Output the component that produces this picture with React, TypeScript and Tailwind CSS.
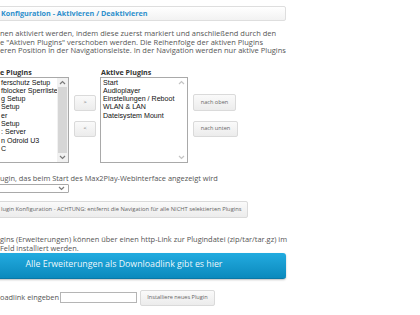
import React from 'react'

const leftItems = [
    'ferschutz Setup',
    'fblocker Sperrliste',
    'g Setup',
    ' Setup',
    'er',
    'Setup',
    ': Server',
    'n Odroid U3',
    'C',
]

const rightItems = ['Start', 'Audioplayer', 'Einstellungen / Reboot', 'WLAN & LAN', 'Dateisystem Mount']

function Chevron({ up, light }: { up?: boolean; light?: boolean }) {
    return (
        <svg width="7" height="5" viewBox="0 0 7 5">
            <polyline
                points={up ? '1,4 3.5,1.5 6,4' : '1,1 3.5,3.5 6,1'}
                fill="none"
                stroke={light ? '#c4c4c4' : '#7a7a7a'}
                strokeWidth="1.2"
            />
        </svg>
    )
}

function ListBox({ items, pad, active }: { items: string[]; pad: number; active?: boolean }) {
    return (
        <div className="relative h-[86px] border border-[#a9a9a9] bg-white overflow-hidden">
            <div className="pt-[1px] font-['Liberation_Sans'] text-[7.1px] leading-[8.33px] text-[#111]">
                {items.map(i => (
                    <div key={i} className="whitespace-nowrap" style={{ paddingLeft: pad }}>{i}</div>
                ))}
            </div>
            <div className={`absolute right-0 top-0 bottom-0 w-[11px] flex flex-col items-center justify-between py-[2px] ${active ? 'bg-[#f1f1f1]' : 'bg-white'}`}>
                <Chevron up light={!active} />
                {active && <div className="w-[9px] flex-1 my-[2px] bg-[#d6d6d6]" />}
                <Chevron light={!active} />
            </div>
        </div>
    )
}

function SmallButton({ children, className }: { children: React.ReactNode; className?: string }) {
    return (
        <button type="button" className={`flex items-center justify-center border border-[#dadada] rounded-[2px] bg-gradient-to-b from-[#fafafa] to-[#ececec] text-[5.6px] text-[#666] ${className ?? ''}`}>
            {children}
        </button>
    )
}

export default function App() {
    return (
        <div className="w-[420px] h-[315px] overflow-hidden bg-white font-['Open_Sans'] text-[#555]">
            <div className="-ml-[38px] w-[324px] pt-[6px]">
                <div className="h-[15px] border border-[#dedede] rounded-[2px] bg-gradient-to-b from-white to-[#f2f2f2] flex items-center pl-[38px]">
                    <span className="text-[7.2px] font-bold text-[#2d8fcc] whitespace-nowrap">Konfiguration - Aktivieren / Deaktivieren</span>
                </div>

                <div className="mt-[8px] pl-[38px] text-[7.5px] leading-[8.5px] whitespace-nowrap">
                    <div>nen aktiviert werden, indem diese zuerst markiert und anschließend durch den</div>
                    <div>e "Aktiven Plugins" verschoben werden. Die Reihenfolge der aktiven Plugins</div>
                    <div>eren Position in der Navigationsleiste. In der Navigation werden nur aktive Plugins</div>
                </div>

                <div className="mt-[13px] flex">
                    <div className="w-[107px]">
                        <div className="h-[9px] leading-[9px] text-[7.1px] font-bold text-[#333] pl-[38px] whitespace-nowrap">e Plugins</div>
                        <ListBox items={leftItems} pad={38} active />
                    </div>
                    <div className="ml-[5px] w-[22px] pt-[27px] flex flex-col gap-[10px]">
                        <SmallButton className="h-[16px] w-[22px]">&gt;</SmallButton>
                        <SmallButton className="h-[16px] w-[22px]">&lt;</SmallButton>
                    </div>
                    <div className="ml-[4px] w-[88px]">
                        <div className="h-[9px] leading-[9px] text-[7.1px] font-bold text-[#333] pl-[1px] whitespace-nowrap">Aktive Plugins</div>
                        <ListBox items={rightItems} pad={2} />
                    </div>
                    <div className="ml-[5px] pt-[26px] flex flex-col gap-[10px]">
                        <SmallButton className="h-[17px] w-[43px]">nach oben</SmallButton>
                        <SmallButton className="h-[16px] w-[45px]">nach unten</SmallButton>
                    </div>
                </div>

                <div className="mt-[11px] pl-[38px] text-[7.4px] leading-[9px] whitespace-nowrap">ugin, das beim Start des Max2Play-Webinterface angezeigt wird</div>
                <div className="mt-[1px] w-[107px] h-[9px] border border-[#a9a9a9] rounded-[1px] bg-white flex items-center justify-end pr-[3px]">
                    <Chevron />
                </div>

                <SmallButton className="mt-[8px] h-[17px] w-[286px] !justify-start pl-[38px] whitespace-nowrap !text-[5.75px]">
                    lugin Konfiguration - ACHTUNG: entfernt die Navigation für alle NICHT selektierten Plugins
                </SmallButton>

                <div className="mt-[17px] pl-[38px] text-[7.45px] leading-[9px] whitespace-nowrap">
                    <div>gins (Erweiterungen) können über einen http-Link zur Plugindatei (zip/tar/tar.gz) im</div>
                    <div>Feld installiert werden.</div>
                </div>

                <div className="h-[26px] rounded-[3px] bg-gradient-to-b from-[#22abe0] to-[#0a8abd] border-b border-[#0a78a6] shadow-[0_1px_2px_rgba(0,0,0,0.25)] flex items-center justify-center text-[8.8px] text-white/95 whitespace-nowrap">
                    Alle Erweiterungen als Downloadlink gibt es hier
                </div>

                <div className="mt-[11px] flex items-center pl-[38px]">
                    <span className="text-[7.4px] whitespace-nowrap w-[60px]">oadlink eingeben</span>
                    <div className="w-[77px] h-[11px] border border-[#b5b5b5] bg-white" />
                    <SmallButton className="ml-[3px] h-[16px] w-[75px]">Installiere neues Plugin</SmallButton>
                </div>
            </div>
        </div>
    )
}
